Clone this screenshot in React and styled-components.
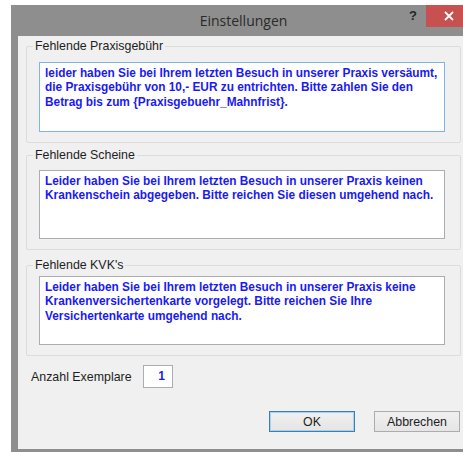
import styled, { createGlobalStyle } from "styled-components";

const GlobalStyle = createGlobalStyle`
  html, body {
    margin: 0;
    padding: 0;
    background: #ffffff;
    overflow: hidden;
  }
  * {
    box-sizing: border-box;
  }
`;

const Page = styled.div`
  width: 463px;
  height: 452px;
  padding: 5px 0 0 11px;
  overflow: hidden;
`;

const Window = styled.div`
  width: 465px;
  height: 447px;
  background: #8e8e8e;
  padding: 0 7px 3px 7px;
  display: flex;
  flex-direction: column;
`;

const TitleBar = styled.div`
  height: 31px;
  display: grid;
  grid-template-columns: 1fr auto 1fr;
  align-items: start;
  margin: 0 -7px;
`;

const Title = styled.div`
  grid-column: 2;
  font-family: "Open Sans", "Noto Sans", sans-serif;
  font-size: 14px;
  line-height: 31px;
  color: #2a2a2a;
`;

const Controls = styled.div`
  grid-column: 3;
  justify-self: end;
  display: flex;
  align-items: flex-start;
  padding-right: 4px;
`;

const HelpButton = styled.div`
  width: 26px;
  height: 21px;
  font-family: "Liberation Sans", Arial, sans-serif;
  font-weight: bold;
  font-size: 13px;
  line-height: 21px;
  text-align: center;
  color: #262626;
`;

const CloseButton = styled.div`
  width: 46px;
  height: 22px;
  background: #c75050;
  display: flex;
  align-items: center;
  justify-content: center;
`;

const Client = styled.div`
  flex: 1;
  background: #f0f0f0;
  padding: 3px 8px 17px 8px;
  display: flex;
  flex-direction: column;
  font-family: "Liberation Sans", Arial, sans-serif;
  font-size: 12.4px;
  color: #1e1e1e;
`;

const Group = styled.fieldset`
  margin: 0 0 ${(p) => p.$after}px 0;
  padding: 0 15px 10px 6px;
  border: 1px solid #dcdcdc;
  border-radius: 2px;
  min-width: 0;
`;

const Legend = styled.legend`
  padding: 0 2px;
  line-height: 14px;
  font-size: 12.4px;
`;

const MessageBox = styled.div`
  margin: ${(p) => p.$top}px 0 0 6px;
  height: ${(p) => p.$height}px;
  background: #ffffff;
  border: 1px solid ${(p) => (p.$focused ? "#7eb4ea" : "#abadb3")};
  padding: 3px 5px;
  font-family: "Liberation Sans", Arial, sans-serif;
  font-weight: bold;
  font-size: 11.85px;
  line-height: 14.3px;
  color: #1a1af6;
  white-space: nowrap;
  overflow: hidden;
`;

const CopiesRow = styled.div`
  display: flex;
  align-items: center;
  margin-top: 9px;
  padding-left: 5px;
`;

const CopiesLabel = styled.span`
  width: 112px;
`;

const CopiesInput = styled.div`
  width: 30px;
  height: 23px;
  background: #ffffff;
  border: 1px solid #abadb3;
  padding-right: 7px;
  text-align: right;
  line-height: 21px;
  font-weight: bold;
  font-size: 12px;
  color: #1a1af6;
`;

const ButtonRow = styled.div`
  margin-top: auto;
  display: flex;
  justify-content: flex-end;
  gap: 19px;
  padding-right: 1px;
`;

const Button = styled.button`
  width: 86px;
  height: 21px;
  padding: 0;
  font-family: "Liberation Sans", Arial, sans-serif;
  font-size: 12.4px;
  color: #1e1e1e;
  background: linear-gradient(#f0f0f0, #e5e5e5);
  border: 1px solid ${(p) => (p.$primary ? "#3c7fb1" : "#acacac")};
  box-shadow: ${(p) => (p.$primary ? "inset 0 0 0 1px #a7d0f2" : "none")};
  border-radius: 0;
`;

const groups = [
  {
    title: "Fehlende Praxisgebühr",
    text: (
      <>
        leider haben Sie bei Ihrem letzten Besuch in unserer Praxis versäumt,
        <br />
        die Praxisgebühr von 10,- EUR zu entrichten. Bitte zahlen Sie den
        <br />
        Betrag bis zum {"{Praxisgebuehr_Mahnfrist}"}.
      </>
    ),
    top: 9,
    height: 70,
    after: 5,
    focused: true,
  },
  {
    title: "Fehlende Scheine",
    text: (
      <>
        Leider haben Sie bei Ihrem letzten Besuch in unserer Praxis keinen
        <br />
        Krankenschein abgegeben. Bitte reichen Sie diesen umgehend nach.
      </>
    ),
    top: 8,
    height: 69,
    after: 8,
  },
  {
    title: "Fehlende KVK's",
    text: (
      <>
        Leider haben Sie bei Ihrem letzten Besuch in unserer Praxis keine
        <br />
        Krankenversichertenkarte vorgelegt. Bitte reichen Sie Ihre
        <br />
        Versichertenkarte umgehend nach.
      </>
    ),
    top: 4,
    height: 69,
    after: 0,
  },
];

export default function App() {
  return (
    <Page>
      <GlobalStyle />
      <Window>
        <TitleBar>
          <Title>Einstellungen</Title>
          <Controls>
            <HelpButton>?</HelpButton>
            <CloseButton>
              <svg width="10" height="10" viewBox="0 0 10 10">
                <path d="M1 1 L9 9 M9 1 L1 9" stroke="#ffffff" strokeWidth="1.8" />
              </svg>
            </CloseButton>
          </Controls>
        </TitleBar>
        <Client>
          {groups.map((g) => (
            <Group key={g.title} $after={g.after}>
              <Legend>{g.title}</Legend>
              <MessageBox $top={g.top} $height={g.height} $focused={g.focused}>
                {g.text}
              </MessageBox>
            </Group>
          ))}
          <CopiesRow>
            <CopiesLabel>Anzahl Exemplare</CopiesLabel>
            <CopiesInput>1</CopiesInput>
          </CopiesRow>
          <ButtonRow>
            <Button $primary>OK</Button>
            <Button>Abbrechen</Button>
          </ButtonRow>
        </Client>
      </Window>
    </Page>
  );
}
